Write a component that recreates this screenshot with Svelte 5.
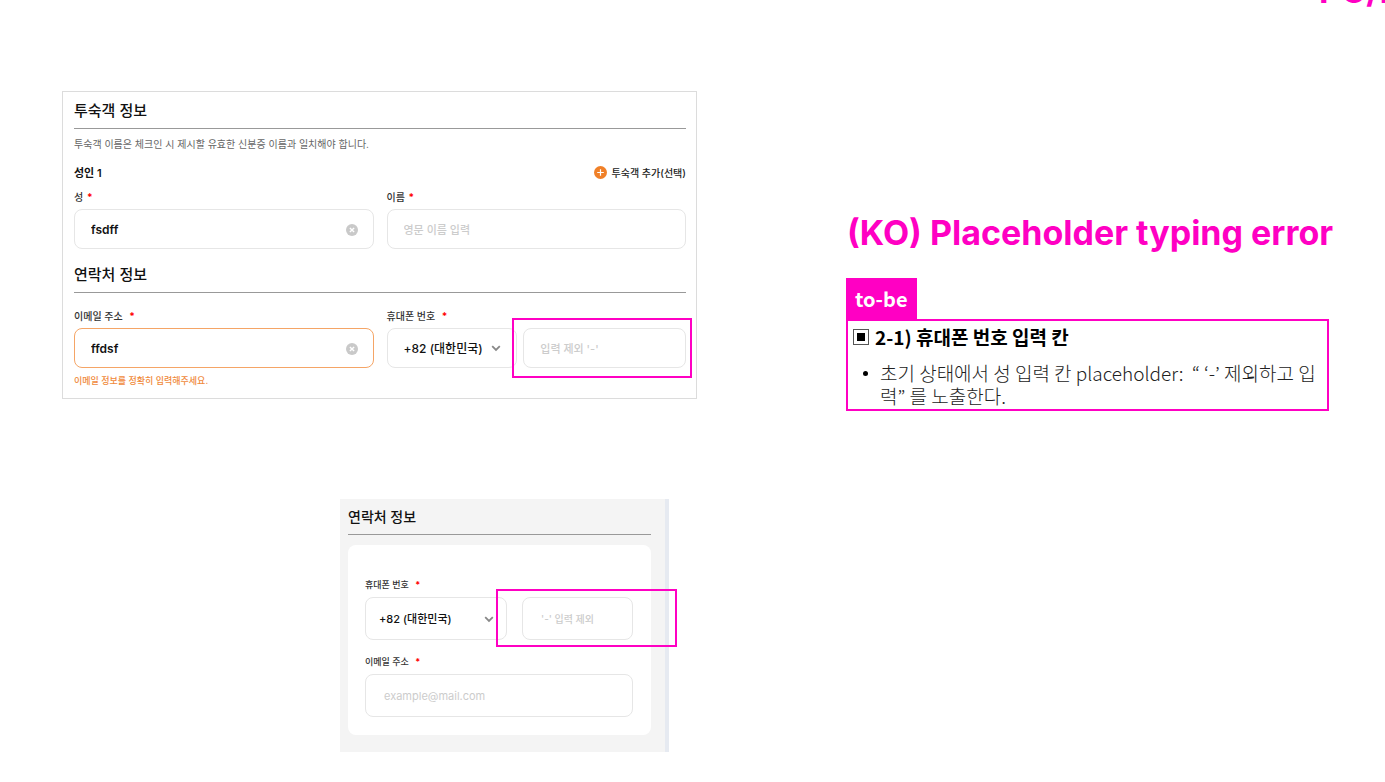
<script>
  let lastName = $state('fsdff');
  let firstName = $state('');
  let email = $state('ffdsf');
  let phone = $state('');
  let country = $state('+82');

  let mobilePhone = $state('');
  let mobileEmail = $state('');
  let mobileCountry = $state('+82');
</script>

{#snippet chevron()}
  <svg class="chevron" viewBox="0 0 10 10" aria-hidden="true">
    <path d="M1.2 3.2 5 6.9l3.8-3.7" />
  </svg>
{/snippet}

{#snippet clearIcon()}
  <svg viewBox="0 0 12 12" aria-hidden="true">
    <circle cx="6" cy="6" r="6" fill="#c9c9c9" />
    <path d="M3.9 3.9l4.2 4.2M8.1 3.9L3.9 8.1" stroke="#fff" stroke-width="1.4" />
  </svg>
{/snippet}

<div class="page">
  <header>
    <p class="platform">PC/MO</p>
  </header>

  <main>
    <div class="screens">
      <form class="desktop">
        <h2>투숙객 정보</h2>
        <p class="notice">투숙객 이름은 체크인 시 제시할 유효한 신분증 이름과 일치해야 합니다.</p>
        <div class="guest">
          <strong>성인 1</strong>
          <button type="button" class="add">
            <svg viewBox="0 0 13 13" aria-hidden="true">
              <circle cx="6.5" cy="6.5" r="6.5" fill="#f08028" />
              <path d="M6.5 3.2v6.6M3.2 6.5h6.6" stroke="#fff" stroke-width="1.2" />
            </svg>
            투숙객 추가(선택)
          </button>
        </div>
        <div class="columns">
          <div class="field">
            <label for="last-name">성 <i>*</i></label>
            <div class="control">
              <input id="last-name" type="text" bind:value={lastName} />
              <button type="button" class="clear" aria-label="지우기" onclick={() => (lastName = '')}>
                {@render clearIcon()}
              </button>
            </div>
          </div>
          <div class="field">
            <label for="first-name">이름 <i>*</i></label>
            <div class="control">
              <input id="first-name" type="text" placeholder="영문 이름 입력" bind:value={firstName} />
            </div>
          </div>
        </div>

        <h2 class="contact">연락처 정보</h2>
        <div class="columns">
          <div class="field">
            <label for="email">이메일 주소 <i class="wide">*</i></label>
            <div class="control">
              <input id="email" class="invalid" type="text" bind:value={email} />
              <button type="button" class="clear" aria-label="지우기" onclick={() => (email = '')}>
                {@render clearIcon()}
              </button>
            </div>
            <p class="error">이메일 정보를 정확히 입력해주세요.</p>
          </div>
          <div class="field">
            <label for="phone">휴대폰 번호 <i class="wide">*</i></label>
            <div class="phone">
              <div class="control">
                <select aria-label="국가 번호" bind:value={country}>
                  <option value="+82">+82 (대한민국)</option>
                </select>
                {@render chevron()}
              </div>
              <div class="control marked">
                <input id="phone" type="tel" placeholder="입력 제외 '-'" bind:value={phone} />
              </div>
            </div>
          </div>
        </div>
      </form>

      <form class="mobile">
        <h2>연락처 정보</h2>
        <div class="card">
          <div class="field">
            <label for="m-phone">휴대폰 번호 <i class="wide">*</i></label>
            <div class="phone">
              <div class="control">
                <select aria-label="국가 번호" bind:value={mobileCountry}>
                  <option value="+82">+82 (대한민국)</option>
                </select>
                {@render chevron()}
              </div>
              <div class="control marked">
                <input id="m-phone" type="tel" placeholder="'-' 입력 제외" bind:value={mobilePhone} />
              </div>
            </div>
          </div>
          <div class="field">
            <label for="m-email">이메일 주소 <i class="wide">*</i></label>
            <div class="control">
              <input id="m-email" class="mail" type="email" placeholder="example@mail.com" bind:value={mobileEmail} />
            </div>
          </div>
        </div>
      </form>
    </div>

    <section class="note">
      <h1>(KO) Placeholder typing error</h1>
      <span class="tag">to-be</span>
      <div class="spec">
        <h3>
          <svg viewBox="0 0 16 16" aria-hidden="true">
            <rect x="0.5" y="0.5" width="15" height="15" fill="none" stroke="#555" />
            <rect x="4" y="4" width="8" height="8" />
          </svg>
          2-1) 휴대폰 번호 입력 칸
        </h3>
        <ul>
          <li>
            <span>초기 상태에서 성 입력 칸 placeholder:&nbsp; “ ‘-’ 제외하고 입력” 를 노출한다.</span>
          </li>
        </ul>
      </div>
    </section>
  </main>
</div>

<style>
  :global(body) {
    margin: 0;
    background: #fff;
  }

  .page {
    --pink: #ff00c3;
    --line: #e6e6e6;
    overflow-x: hidden;
    color: #111;
    font-family: Inter, 'Noto Sans CJK KR', sans-serif;
  }

  h1,
  h2,
  h3,
  p,
  ul {
    margin: 0;
  }

  header {
    display: flex;
    justify-content: flex-end;
    height: 91px;
    overflow: hidden;
  }

  .platform {
    width: 66px;
    margin-top: -29px;
    color: var(--pink);
    font-size: 34px;
    font-weight: 700;
    line-height: 40px;
    white-space: nowrap;
  }

  main {
    display: grid;
    grid-template-columns: minmax(0, 635fr) minmax(0, 483fr);
    column-gap: 149px;
    align-items: start;
    padding: 0 56px 30px 62px;
  }

  /* form parts */
  h2 {
    padding-top: 2px;
    border-bottom: 1px solid #999;
    font-size: 15px;
    font-weight: 500;
    line-height: 34px;
  }

  label {
    display: block;
    color: #333;
    font-size: 10px;
    font-weight: 500;
    line-height: 20px;
    padding-bottom: 2px;
  }

  label i {
    margin-left: 1px;
    color: #f00;
    font-style: normal;
    font-weight: 700;
  }

  label i.wide {
    margin-left: 4px;
  }

  .control {
    position: relative;
  }

  input,
  select {
    display: block;
    box-sizing: border-box;
    width: 100%;
    height: 40px;
    margin: 0;
    padding: 0 16px;
    border: 1px solid var(--line);
    border-radius: 8px;
    outline: none;
    background: #fff;
    color: #111;
    font-family: inherit;
    font-size: 12px;
    font-weight: 600;
    appearance: none;
  }

  select {
    font-weight: 500;
  }

  input::placeholder {
    color: #ccc;
    opacity: 1;
    font-size: 11px;
    font-weight: 500;
  }

  input.invalid {
    border-color: #f5a566;
  }

  .clear {
    position: absolute;
    top: 15px;
    right: 16px;
    width: 12px;
    height: 12px;
    padding: 0;
    border: 0;
    background: none;
    cursor: pointer;
  }

  .clear svg {
    display: block;
  }

  .chevron {
    position: absolute;
    top: 50%;
    right: 16px;
    width: 10px;
    height: 10px;
    margin-top: -5px;
    fill: none;
    stroke: #888;
    stroke-width: 1.8;
    pointer-events: none;
  }

  .marked::after {
    content: '';
    position: absolute;
    inset: -10px -6px -10px -11px;
    border: 2px solid var(--pink);
    pointer-events: none;
  }

  .phone {
    display: grid;
    grid-template-columns: 131fr 163fr;
    gap: 6px;
  }

  /* desktop screen */
  .desktop {
    padding: 0 10px 4px 11px;
    border: 1px solid #dcdcdc;
  }

  .notice {
    color: #666;
    font-size: 10px;
    line-height: 31px;
  }

  .guest {
    display: flex;
    justify-content: space-between;
    align-items: center;
    height: 24px;
    margin-bottom: 3px;
  }

  .guest strong {
    font-size: 11px;
    font-weight: 600;
  }

  .add {
    display: flex;
    align-items: center;
    gap: 5px;
    padding: 0;
    border: 0;
    background: none;
    color: #222;
    font-family: inherit;
    font-size: 10px;
    font-weight: 500;
    cursor: pointer;
  }

  .add svg {
    width: 13px;
    height: 13px;
  }

  .columns {
    display: grid;
    grid-template-columns: 1fr 1fr;
    gap: 13px;
  }

  .contact {
    margin-bottom: 13px;
    padding-top: 9px;
  }

  .error {
    color: #f08a3c;
    font-size: 9px;
    font-weight: 500;
    line-height: 26px;
  }

  /* mobile screen */
  .mobile {
    margin: 100px 28px 0 278px;
    padding: 0 14px 17px 8px;
    border-right: 4px solid #e6eaf1;
    background: #f4f4f4;
  }

  .mobile h2 {
    padding-top: 0;
    font-size: 14px;
    line-height: 35px;
  }

  .card {
    display: grid;
    gap: 11px;
    margin-top: 10px;
    padding: 29px 18px 18px 17px;
    border-radius: 8px;
    background: #fff;
  }

  .mobile label {
    font-size: 9px;
    line-height: 21px;
  }

  .mobile input,
  .mobile select {
    height: 43px;
    padding: 0 18px;
    font-size: 11px;
  }

  .mobile select {
    padding: 0 13px;
  }

  .mobile input::placeholder {
    font-size: 10px;
  }

  .mobile input.mail::placeholder {
    font-size: 11px;
    font-weight: 400;
  }

  .mobile .phone {
    grid-template-columns: 142fr 111fr;
    gap: 15px;
  }

  .mobile .chevron {
    right: 13px;
  }

  .mobile .marked::after {
    inset: -8px -44px -7px -26px;
  }

  /* annotation */
  .note {
    padding-top: 121px;
  }

  h1 {
    padding-left: 1px;
    color: var(--pink);
    font-size: 34px;
    font-weight: 700;
    line-height: 42px;
    white-space: nowrap;
  }

  .tag {
    display: block;
    width: fit-content;
    margin-top: 24px;
    padding: 0 9px;
    background: var(--pink);
    color: #fff;
    font-family: 'Noto Sans CJK KR', sans-serif;
    font-size: 20px;
    font-weight: 700;
    line-height: 41px;
  }

  .spec {
    padding: 1px 0 2px 5px;
    border: 2px solid var(--pink);
    color: #000;
    font-family: 'Noto Sans CJK KR', sans-serif;
  }

  h3 {
    display: flex;
    align-items: center;
    gap: 6px;
    font-size: 19px;
    font-weight: 700;
    line-height: 30px;
  }

  h3 svg {
    width: 16px;
    height: 16px;
  }

  ul {
    margin-top: 9px;
    padding-left: 10px;
    color: #222;
    font-size: 19px;
    font-weight: 300;
    line-height: 23px;
    list-style: none;
    word-break: break-all;
  }

  li {
    display: flex;
    gap: 12px;
  }

  li::before {
    content: '';
    flex: none;
    width: 5px;
    height: 5px;
    margin-top: 10px;
    border-radius: 50%;
    background: #000;
  }
</style>
